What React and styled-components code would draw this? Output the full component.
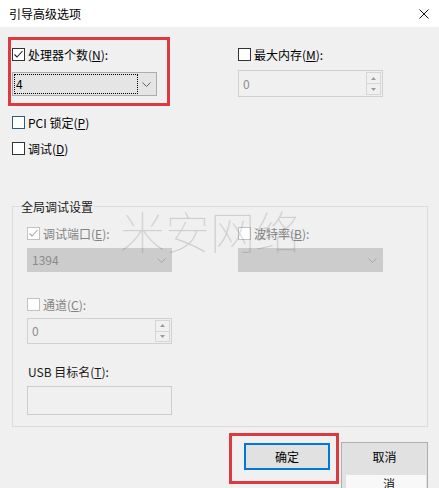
import React from "react";
import styled, { createGlobalStyle, css } from "styled-components";

const GlobalStyle = createGlobalStyle`
  html, body { margin: 0; padding: 0; background: #f0f0f0; }
  body {
    font-family: "Noto Sans CJK SC", "Noto Sans", sans-serif;
    font-size: 12px;
    color: #000;
  }
  * { box-sizing: border-box; }
`;

const Window = styled.div`
  position: relative;
  width: 439px;
  height: 488px;
  overflow: hidden;
  background: #f0f0f0;
  display: flex;
  flex-direction: column;
`;

const TitleBar = styled.div`
  height: 27px;
  flex: none;
  background: #ffffff;
  display: flex;
  align-items: center;
  justify-content: space-between;
  padding: 0 10px 0 9px;
  font-size: 12px;
  line-height: 1;
`;

const Body = styled.div`
  flex: 1;
  display: flex;
  flex-direction: column;
  padding: 0 11px 0 12px;
`;

const TwoCols = styled.div`
  display: grid;
  grid-template-columns: 145px 145px;
  column-gap: ${(p) => p.$gap}px;
  margin-top: ${(p) => p.$top}px;
  align-items: start;
`;

const Field = styled.div`
  display: flex;
  flex-direction: column;
  width: ${(p) => (p.$w ? `${p.$w}px` : "auto")};
`;

const CheckRow = styled.div`
  height: 19px;
  display: flex;
  align-items: center;
  gap: 3px;
  margin-top: ${(p) => p.$top || 0}px;
  color: ${(p) => (p.$disabled ? "#838383" : "#000")};
  line-height: 1;
  white-space: nowrap;
`;

const Label = styled.div`
  height: 19px;
  display: flex;
  align-items: center;
  margin-top: ${(p) => p.$top || 0}px;
  padding-left: 1px;
  line-height: 1;
  color: #1a1a1a;
`;

const Box = styled.span`
  width: 13px;
  height: 13px;
  flex: none;
  display: inline-flex;
  align-items: center;
  justify-content: center;
  background: #ffffff;
  border: 1px solid ${(p) => p.$border};
`;

const Combo = styled.div`
  height: 24px;
  margin-top: ${(p) => p.$top}px;
  display: flex;
  align-items: stretch;
  padding: 1px 5px 1px 1px;
  ${(p) =>
    p.$disabled
      ? css`
          background: #cccccc;
          border: 1px solid #cccccc;
          color: #8a8a8a;
        `
      : css`
          background: #e5e5e5;
          border: 1px solid #acacac;
          color: #000;
        `}
`;

const ComboText = styled.div`
  flex: 1;
  display: flex;
  align-items: center;
  padding-left: ${(p) => (p.$focus ? 1 : 2)}px;
  margin-right: ${(p) => (p.$focus ? 4 : 0)}px;
  border: 1px ${(p) => (p.$focus ? "dotted #000" : "solid transparent")};
  font-size: 12px;
  line-height: 1;
`;

const Chevron = styled.svg`
  width: 9px;
  height: 5px;
  align-self: center;
  flex: none;
`;

const Spin = styled.div`
  height: ${(p) => p.$h}px;
  margin-top: ${(p) => p.$top}px;
  display: flex;
  border: 1px solid #d0d0d0;
  background: #f0f0f0;
  color: #8d8d8d;
`;

const SpinText = styled.div`
  flex: 1;
  display: flex;
  align-items: center;
  padding-left: 4px;
  line-height: 1;
`;

const SpinButtons = styled.div`
  width: 16px;
  display: flex;
  flex-direction: column;
  padding: 1px 1px 1px 0;
`;

const SpinButton = styled.div`
  flex: 1;
  display: flex;
  align-items: center;
  justify-content: center;
  border: 1px solid #d6d6d6;
  & + & { border-top: none; }
`;

const Group = styled.div`
  position: relative;
  margin-top: 48px;
  border: 1px solid #dcdcdc;
  padding: 17px 0 11px 14px;
`;

const GroupTitle = styled.div`
  position: absolute;
  left: 7px;
  top: -8px;
  padding: 0 1px;
  background: #f0f0f0;
  line-height: 15px;
  color: #1a1a1a;
`;

const TextBox = styled.div`
  width: 145px;
  height: 29px;
  margin-top: 5px;
  border: 1px solid #cdcdcd;
  background: #f0f0f0;
`;

const ButtonRow = styled.div`
  display: flex;
  justify-content: flex-end;
  align-items: flex-start;
  gap: 11px;
  margin-top: 15px;
`;

const Button = styled.div`
  width: ${(p) => p.$w}px;
  height: ${(p) => p.$h}px;
  margin-top: ${(p) => p.$top || 0}px;
  display: flex;
  align-items: flex-start;
  justify-content: center;
  line-height: ${(p) => (p.$primary ? 23 : 27)}px;
  background: #e1e1e1;
  border: ${(p) => (p.$primary ? "2px solid #0078d7" : "1px solid #adadad")};
  color: #000;
`;

const Highlight = styled.div`
  position: absolute;
  left: ${(p) => p.$x}px;
  top: ${(p) => p.$y}px;
  width: ${(p) => p.$w}px;
  height: ${(p) => p.$h}px;
  border: 3px solid #dc3a40;
  pointer-events: none;
`;

const Watermark = styled.div`
  position: absolute;
  left: 120px;
  top: 208px;
  font-size: 45px;
  font-weight: 100;
  line-height: 1;
  color: rgba(90, 90, 90, 0.22);
  pointer-events: none;
  white-space: nowrap;
`;

const Artifact = styled.div`
  position: absolute;
  left: 346px;
  top: 475px;
  width: 80px;
  height: 13px;
  background: #f8f8f8;
  padding-left: 37px;
  line-height: 18px;
  font-size: 12px;
  color: #111;
  overflow: hidden;
`;

const CheckBox = ({ checked, disabled, border }) => (
  <Box $border={border || (disabled ? "#c2c2c2" : "#333333")}>
    {checked && (
      <svg width="11" height="11" viewBox="0 0 11 11">
        <polyline
          points="1.5,5.5 4,8 9.5,2"
          fill="none"
          stroke={disabled ? "#a8a8a8" : "#222"}
          strokeWidth="1.1"
        />
      </svg>
    )}
  </Box>
);

const Down = ({ color }) => (
  <Chevron viewBox="0 0 9 5">
    <polyline points="0.5,0.5 4.5,4.5 8.5,0.5" fill="none" stroke={color} strokeWidth="1" />
  </Chevron>
);

const Tri = ({ up }) => (
  <svg width="5" height="3" viewBox="0 0 5 3">
    <polygon points={up ? "0,3 5,3 2.5,0" : "0,0 5,0 2.5,3"} fill="#9a9a9a" />
  </svg>
);

const SpinBox = ({ value, h, top }) => (
  <Spin $h={h} $top={top}>
    <SpinText>{value}</SpinText>
    <SpinButtons>
      <SpinButton><Tri up /></SpinButton>
      <SpinButton><Tri /></SpinButton>
    </SpinButtons>
  </Spin>
);

export default function App() {
  return (
    <>
      <GlobalStyle />
      <Window>
        <TitleBar>
          <span>引导高级选项</span>
          <svg width="10" height="10" viewBox="0 0 10 10">
            <path d="M0.5 0.5 L9.5 9.5 M9.5 0.5 L0.5 9.5" stroke="#111" strokeWidth="1" />
          </svg>
        </TitleBar>
        <Body>
          <TwoCols $gap={81} $top={18}>
            <Field>
              <CheckRow>
                <CheckBox checked />
                <span>处理器个数(<u>N</u>):</span>
              </CheckRow>
              <Combo $top={8}>
                <ComboText $focus>4</ComboText>
                <Down color="#606060" />
              </Combo>
            </Field>
            <Field>
              <CheckRow>
                <CheckBox />
                <span>最大内存(<u>M</u>):</span>
              </CheckRow>
              <SpinBox value="0" h={27} top={6} />
            </Field>
          </TwoCols>
          <CheckRow $top={16}>
            <CheckBox border="#2f5a78" />
            <span>PCI 锁定(<u>P</u>)</span>
          </CheckRow>
          <CheckRow $top={7}>
            <CheckBox />
            <span>调试(<u>D</u>)</span>
          </CheckRow>
          <Group>
            <GroupTitle>全局调试设置</GroupTitle>
            <TwoCols $gap={66} $top={0}>
              <Field>
                <CheckRow $disabled>
                  <CheckBox checked disabled />
                  <span>调试端口(<u>E</u>):</span>
                </CheckRow>
                <Combo $top={5} $disabled>
                  <ComboText>1394</ComboText>
                  <Down color="#a8a8a8" />
                </Combo>
              </Field>
              <Field>
                <CheckRow $disabled>
                  <CheckBox disabled />
                  <span>波特率(<u>B</u>):</span>
                </CheckRow>
                <Combo $top={5} $disabled>
                  <ComboText></ComboText>
                  <Down color="#a8a8a8" />
                </Combo>
              </Field>
            </TwoCols>
            <CheckRow $top={23} $disabled>
              <CheckBox disabled />
              <span>通道(<u>C</u>):</span>
            </CheckRow>
            <Field $w={145}>
              <SpinBox value="0" h={26} top={4} />
            </Field>
            <Label $top={18}>USB 目标名(<u>T</u>):</Label>
            <TextBox />
          </Group>
          <ButtonRow>
            <Button $w={86} $h={27} $top={1} $primary>确定</Button>
            <Button $w={87} $h={50}>取消</Button>
          </ButtonRow>
        </Body>
        <Watermark>米安网络</Watermark>
        <Highlight $x={8} $y={37} $w={162} $h={69} />
        <Highlight $x={229} $y={433} $w={110} $h={51} />
        <Artifact>消</Artifact>
      </Window>
    </>
  );
}
